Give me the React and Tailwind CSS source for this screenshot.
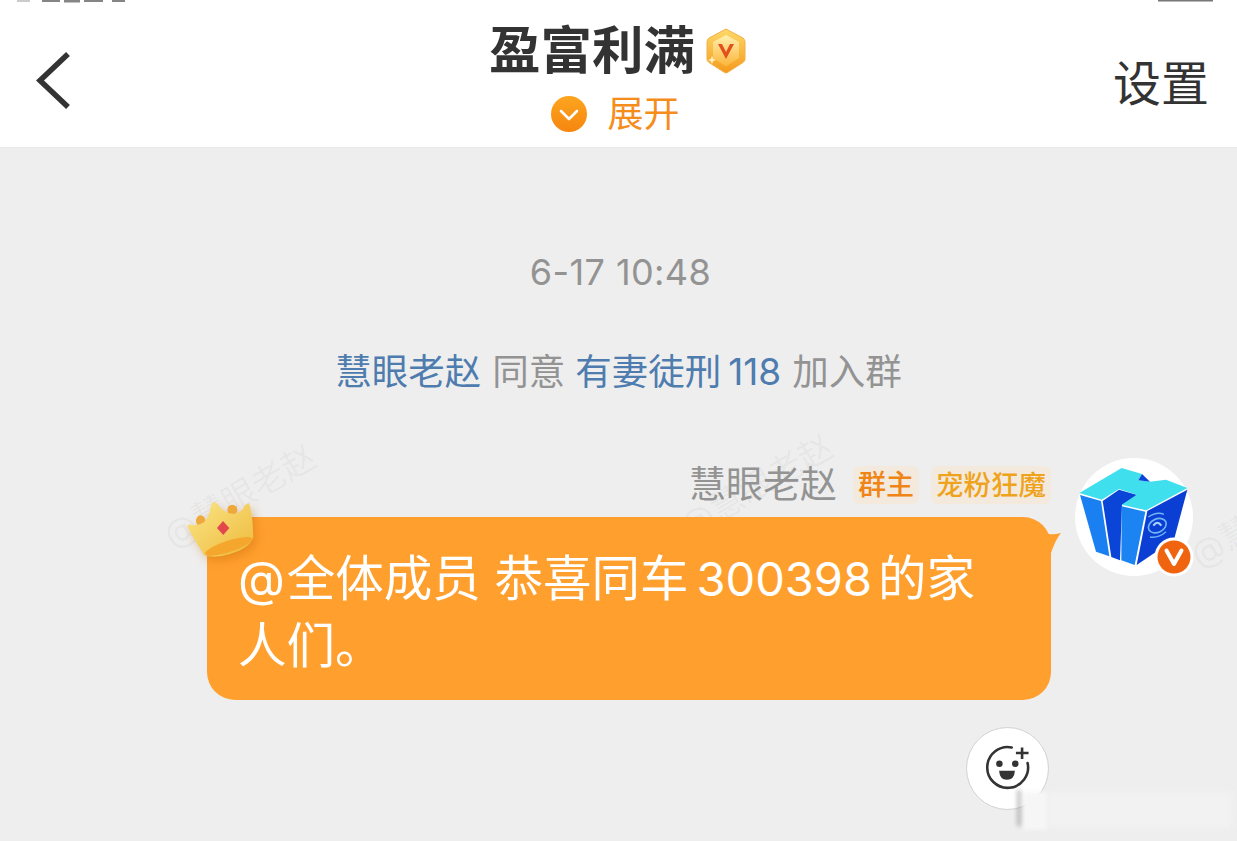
import React from "react";

const fontStack = "font-['Inter','Noto_Sans_CJK_SC',sans-serif]";

function TitleBadge() {
  return (
    <svg width="40" height="46" viewBox="0 0 40 46" className="ml-[11px] mt-[2px]">
      <defs>
        <linearGradient id="hexFill" x1="0" y1="0" x2="0" y2="1">
          <stop offset="0" stopColor="#fdd968" />
          <stop offset="1" stopColor="#f59a1c" />
        </linearGradient>
        <linearGradient id="hexInner" x1="0" y1="0" x2="0" y2="1">
          <stop offset="0" stopColor="#fff0b0" />
          <stop offset="1" stopColor="#fbb53a" />
        </linearGradient>
      </defs>
      <path d="M20 1 L37 10 Q39 11.500 39 14 L39 31 Q39 33 37 34.500 L21.500 44.500 Q20 45.500 18.500 44.500 L3 34.500 Q1 33 1 31 L1 14 Q1 11.500 3 10 Z" fill="url(#hexFill)" stroke="#f2b04a" strokeWidth="1" />
      <path d="M20 7 L33 14 L33 30 L20 38.500 L7 30 L7 14 Z" fill="url(#hexInner)" />
      <path d="M12 16 L20 31 L28 16 L24 16 L20 24 L16 16 Z" fill="#e4501c" />
      <path d="M6 28 l1.200 2.800 2.800 1.200 -2.800 1.200 -1.200 2.800 -1.200 -2.800 -2.800 -1.200 2.800 -1.200 Z" fill="#fff0b8" />
    </svg>
  );
}

function ExpandIcon() {
  return (
    <svg width="36" height="36" viewBox="0 0 36 36">
      <defs>
        <linearGradient id="expandFill" x1="0" y1="0" x2="0" y2="1">
          <stop offset="0" stopColor="#fda51f" />
          <stop offset="1" stopColor="#f6860f" />
        </linearGradient>
      </defs>
      <circle cx="18" cy="18" r="18" fill="url(#expandFill)" />
      <path d="M10 15 L18 23 L26 15" fill="none" stroke="#fff" strokeWidth="2.600" strokeLinecap="round" strokeLinejoin="round" />
    </svg>
  );
}

function Avatar() {
  return (
    <div className="relative w-[118px] h-[118px] rounded-full bg-white shrink-0">
      <svg width="118" height="118" viewBox="105 55 354 354" className="block">
        <path d="M188 184 L237 150 L292 166 L246 196 L240 362 L214 352 Z" fill="#0b45d8" />
        <path d="M118 160 L245 85 L306 103 L295 122 L330 126 L378 120 L442 145 L318 212 L245 195 L290 165 L237 148 L185 180 Z" fill="#3fdfee" />
        <path d="M306 103 L330 126 L295 122 Z" fill="#0b45d8" />
        <path d="M120 166 L183 184 L208 350 L168 336 Z" fill="#1a7ff0" />
        <path d="M245 200 L316 216 L284 376 L244 362 Z" fill="#1c84f2" />
        <path d="M322 214 L442 150 L402 300 L290 376 Z" fill="#0b3fd4" />
        <ellipse cx="352" cy="258" rx="28" ry="20" fill="none" stroke="#6fb6f5" strokeWidth="5" transform="rotate(-25 352 258)" />
        <path d="M325 232 Q350 215 372 224 M330 292 Q355 296 378 276" fill="none" stroke="#6fb6f5" strokeWidth="4" />
        <path d="M340 258 Q352 240 364 258" fill="none" stroke="#a8d6fa" strokeWidth="6" />
      </svg>
      <svg width="40" height="40" viewBox="0 0 40 40" className="absolute left-[79px] top-[79px]">
        <circle cx="20" cy="20" r="19.500" fill="#fff" />
        <circle cx="20" cy="20" r="16.500" fill="#f0640f" />
        <path d="M12.500 13.500 L20 27 L27.500 13.500" fill="none" stroke="#fff" strokeWidth="4" strokeLinejoin="round" strokeLinecap="round" />
      </svg>
    </div>
  );
}

function Crown() {
  return (
    <svg width="68" height="58" viewBox="108 208 204 174" className="absolute left-[-21px] top-[-17px] overflow-visible drop-shadow-[3px_4px_5px_rgba(190,100,0,0.35)]">
      <defs>
        <linearGradient id="crownFill" x1="0" y1="0" x2="1" y2="1">
          <stop offset="0" stopColor="#fbe688" />
          <stop offset="1" stopColor="#edb93a" />
        </linearGradient>
      </defs>
      <ellipse cx="152" cy="270" rx="14" ry="16" fill="#eea93a" />
      <ellipse cx="247" cy="238" rx="15" ry="16" fill="#eea93a" />
      <path d="M163 374 Q135 330 112 290 Q112 280 124 282 Q150 286 165 272 Q180 250 184 222 Q190 208 200 218 Q222 250 250 250 Q274 248 285 224 Q296 212 301 228 Q310 275 310 320 Q300 352 240 370 Q195 384 163 374 Z" fill="url(#crownFill)" />
      <ellipse cx="236" cy="347" rx="74" ry="17" fill="#f4a72c" transform="rotate(-18 236 347)" />
      <path d="M219 271 L238 292 L220 313 L201 292 Z" fill="#e2474d" />
    </svg>
  );
}

function ReactionIcon() {
  return (
    <svg width="83" height="83" viewBox="80 52 250 250">
      <path d="M218 112 A63 63 0 1 0 267 160" fill="none" stroke="#333" strokeWidth="8" strokeLinecap="round" />
      <circle cx="180" cy="162" r="10" fill="#333" />
      <circle cx="229" cy="162" r="10" fill="#333" />
      <path d="M179 184 L228 184 Q226 212 203 212 Q181 212 179 184 Z" fill="#333" />
      <path d="M250 112 L250 148 M231 129 L270 129" fill="none" stroke="#333" strokeWidth="8" />
    </svg>
  );
}

function Watermark({ className, children }) {
  return (
    <span className={`absolute whitespace-nowrap text-[34px] text-black/[0.045] -rotate-[30deg] ${className}`}>
      {children}
    </span>
  );
}

export default function App() {
  return (
    <div className={`${fontStack} relative w-[1237px] h-[841px] overflow-hidden bg-[#eeeeee]`} lang="zh-CN">
      {/* Header */}
      <header className="relative h-[147px] bg-white grid grid-cols-[1fr_auto_1fr] items-start">
        {/* what is left of the cropped status bar */}
        <svg width="1237" height="4" viewBox="0 0 1237 4" className="absolute left-0 top-0">
          <path d="M42 0 H60 V2 H42 Z M64 0 H80 V2.500 H64 Z M84 0 H103 V2 H84 Z M112 0 H125 V2 H112 Z" fill="#333" opacity="0.6" />
          <path d="M17 0 H30 V2 H17 Z" fill="#333" opacity="0.25" />
          <path d="M1158 0 H1213 V1.500 H1158 Z" fill="#777" />
        </svg>
        <div className="pl-[36px] pt-[52px]">
          <svg width="35" height="57" viewBox="0 0 35 57">
            <path d="M32 2 L4 28.500 L32 55" fill="none" stroke="#333" strokeWidth="5.500" />
          </svg>
        </div>
        <div className="flex flex-col items-center pt-[20px]">
          <div className="flex items-center h-[60px] mr-[2px]">
            <span className="text-[51.500px] leading-[60px] font-bold text-[#333]">盈富利满</span>
            <TitleBadge />
          </div>
          <div className="flex items-center mt-[12px] mr-[6px] h-[44px]">
            <ExpandIcon />
            <span className="ml-[20px] text-[36px] leading-[44px] text-[#f58d1d]">展开</span>
          </div>
        </div>
        <div className="flex justify-end pr-[28px] pt-[56px]">
          <span className="text-[48px] leading-[56px] text-[#333]">设置</span>
        </div>
      </header>
      <div className="h-px bg-[#e9e9e9]" />

      {/* Watermarks */}
      <Watermark className="left-[155px] top-[470px]">@慧眼老赵</Watermark>
      <Watermark className="left-[672px] top-[460px]">@慧眼老赵</Watermark>
      <Watermark className="left-[1182px] top-[490px]">@慧眼老赵</Watermark>

      {/* Messages */}
      <main className="flex flex-col">
        <p className="mt-[102px] pl-[4px] text-center text-[36px] leading-[44px] tracking-[0.4px] text-[#939393]">6-17 10:48</p>
        <p className="mt-[56px] flex justify-center text-[36.500px] leading-[44px] text-[#939393]">
          <span className="text-[#4f7cae]">慧眼老赵</span>
          <span className="ml-[11px]">同意</span>
          <span className="ml-[10px] text-[#4f7cae]">有妻徒刑</span>
          <span className="ml-[7px] text-[37px] text-[#4f7cae]">118</span>
          <span className="ml-[11px]">加入群</span>
        </p>

        <div className="relative mt-[64px] flex justify-end pr-[44px]">
          <div className="w-[844px] mr-[24px] flex flex-col">
            <div className="flex justify-end items-center h-[39px] mt-[7px]">
              <span className="text-[37px] leading-[44px] text-[#939393]">慧眼老赵</span>
              <span className="ml-[16px] h-[38px] px-[5px] rounded-[6px] bg-[#f3eadd] text-[28px] leading-[38px] text-[#ee8516] font-medium">群主</span>
              <span className="ml-[12px] h-[38px] px-[5px] rounded-[6px] bg-[#f3eadd] text-[27.500px] leading-[38px] text-[#efa31c] font-medium">宠粉狂魔</span>
            </div>
            <div className="relative mt-[13px] h-[183px] rounded-[28px] bg-[#ff9f2e] pl-[31px] pr-[60px] pt-[28px] text-[48.500px] leading-[67px] text-white">
              <Crown />
              <svg width="14" height="24" viewBox="0 0 14 24" className="absolute right-[-11px] top-[15px]">
                <path d="M0 2 Q6 3 13 1 Q7 8 2 24 Z" fill="#ff9f2e" />
              </svg>
              @<span className="ml-[2px]">全体成员 恭喜同车</span><span className="ml-[8px] text-[47px]">300398</span><span className="ml-[6px]">的家人们。</span>
            </div>
          </div>
          <div className="self-start">
            <Avatar />
          </div>
        </div>

        <div className="mt-[27px] flex justify-end pr-[188px]">
          <div className="w-[83px] h-[83px] rounded-full bg-white border border-[#d2d2d2] flex items-center justify-center shrink-0">
            <ReactionIcon />
          </div>
        </div>
      </main>

      {/* Blurred corner mark */}
      <div className="absolute left-[1047px] top-[792px] w-[185px] h-[36px] bg-[#f2f2f2] blur-[3px]" />
      <div className="absolute left-[1023px] top-[792px] w-[24px] h-[38px] bg-[#f6f6f6] blur-[2px]" />
      <div className="absolute left-[1017px] top-[790px] w-[4px] h-[36px] bg-[#666]/40 blur-[2px]" />
    </div>
  );
}
